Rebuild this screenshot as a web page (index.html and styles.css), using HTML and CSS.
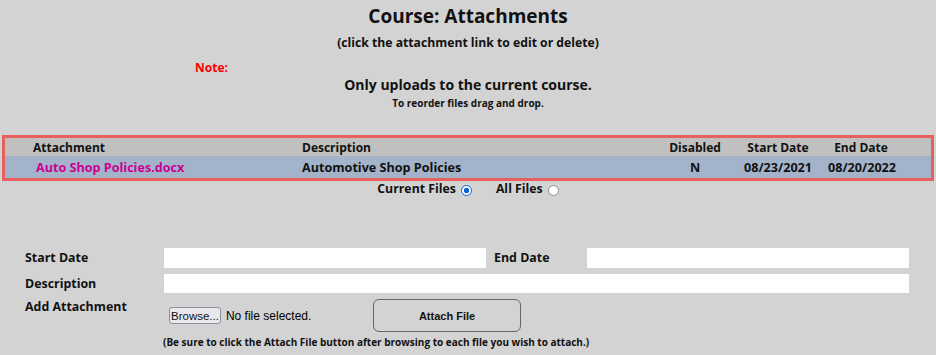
FILE: index.html
```html
<!DOCTYPE html>
<html lang="en">
<head>
    <meta charset="UTF-8">
    <title>Course: Attachments</title>
    <link rel="stylesheet" href="styles.css">
</head>
<body>
    <div class="page">
        <!-- Heading -->
        <h1 class="title">Course: Attachments</h1>
        <p class="subtitle">(click the attachment link to edit or delete)</p>

        <div class="note-row">
            <span class="note">Note:</span>
        </div>
        <p class="note-text">Only uploads to the current course.</p>
        <p class="hint">To reorder files drag and drop.</p>

        <!-- Attachment list -->
        <div class="files">
            <div class="files-row files-head">
                <div class="col-name">Attachment</div>
                <div class="col-desc">Description</div>
                <div class="col-mid">Disabled</div>
                <div class="col-mid">Start Date</div>
                <div class="col-mid">End Date</div>
            </div>
            <div class="files-row files-item">
                <div class="col-name"><a href="#" class="file-link">Auto Shop Policies.docx</a></div>
                <div class="col-desc">Automotive Shop Policies</div>
                <div class="col-mid">N</div>
                <div class="col-mid">08/23/2021</div>
                <div class="col-mid">08/20/2022</div>
            </div>
        </div>

        <div class="filter">
            <label class="filter-opt">Current Files <input type="radio" name="show" checked></label>
            <label class="filter-opt">All Files <input type="radio" name="show"></label>
        </div>

        <!-- Upload form -->
        <form class="upload">
            <div class="form-row">
                <label class="form-label">Start Date</label>
                <input type="text" class="field field-half">
                <label class="form-label label-end">End Date</label>
                <input type="text" class="field field-half">
            </div>
            <div class="form-row row-desc">
                <label class="form-label">Description</label>
                <input type="text" class="field field-full">
            </div>
            <div class="form-row row-attach">
                <label class="form-label label-top">Add Attachment</label>
                <div class="attach-box">
                    <div class="attach-line">
                        <div class="file-pick">
                            <button type="button" class="browse">Browse...</button>
                            <span class="no-file">No file selected.</span>
                        </div>
                        <button type="button" class="attach-btn">Attach File</button>
                    </div>
                    <p class="attach-note">(Be sure to click the Attach File button after browsing to each file you wish to attach.)</p>
                </div>
            </div>
        </form>
    </div>
</body>
</html>
```

FILE: styles.css
```css
body {
    margin: 0;
    padding: 0;
    background-color: #d3d3d3;
    font-family: "Open Sans", "DejaVu Sans", sans-serif;
    font-weight: 700;
    color: #111;
}

.page {
    width: 936px;
}

/* Heading */
.title {
    margin: 4px 0 0;
    font-size: 19px;
    line-height: 24px;
    text-align: center;
}

.subtitle {
    margin: 7px 0 0;
    font-size: 12.2px;
    line-height: 16px;
    text-align: center;
}

.note-row {
    margin-top: 7px;
    padding-left: 195px;
    line-height: 16px;
}

.note {
    color: #ff0000;
    font-size: 12px;
}

.note-text {
    margin: 0;
    font-size: 14px;
    line-height: 18px;
    text-align: center;
}

.hint {
    margin: 3px 0 0;
    font-size: 10px;
    line-height: 12px;
    text-align: center;
}

/* Attachment list */
.files {
    margin: 26px 2px 0;
    border: 3px solid #e8605e;
}

.files-row {
    display: grid;
    grid-template-columns: 297px 360px 66px 100px 66px 1fr;
    align-items: center;
    font-size: 12px;
}

.files-head {
    height: 18px;
    background-color: #c0c0c0;
}

.files-item {
    height: 22px;
    font-size: 12.6px;
    background-color: #a3b3c9;
}

.col-name {
    padding-left: 28px;
}

.files-item .col-name {
    padding-left: 31px;
}

.col-mid {
    text-align: center;
}

.file-link {
    color: #cc0096;
    text-decoration: none;
}

/* Radio filter */
.filter {
    display: flex;
    justify-content: center;
    gap: 24px;
    font-size: 12.3px;
    line-height: 16px;
}

.filter-opt {
    display: flex;
    align-items: center;
}

.filter-opt input {
    appearance: none;
    width: 11px;
    height: 11px;
    margin: 3px 0 0 5px;
    border: 1px solid #8f8f8f;
    border-radius: 50%;
    background-color: #fff;
}

.filter-opt input:checked {
    border-color: #0a64d8;
    background: radial-gradient(circle, #0a64d8 0 2.5px, #fff 3px);
}

/* Upload form */
.upload {
    margin-top: 51px;
    padding-left: 25px;
}

.form-row {
    display: flex;
    align-items: center;
    height: 20px;
    margin-bottom: 6px;
}

.row-desc {
    height: 19px;
}

.form-label {
    width: 139px;
    font-size: 12.4px;
    line-height: 16px;
}

.label-end {
    width: 93px;
    margin-left: 8px;
}

.field {
    height: 100%;
    box-sizing: border-box;
    border: none;
    background-color: #fff;
    padding: 0 4px;
}

.field-half {
    width: 322px;
}

.field-full {
    width: 745px;
}

.row-attach {
    align-items: flex-start;
    height: auto;
}

.attach-line {
    display: flex;
    align-items: center;
}

.file-pick {
    width: 209px;
    display: flex;
    align-items: center;
}

.browse {
    margin-left: 5px;
    height: 17px;
    padding: 0 1px;
    font-family: "Liberation Sans", Arial, sans-serif;
    font-size: 11.5px;
    color: #111;
    background-color: #e9e9ed;
    border: 1px solid #8f8f9d;
    border-radius: 3px;
}

.no-file {
    margin-left: 5px;
    font-family: "Liberation Sans", Arial, sans-serif;
    font-size: 12px;
    font-weight: 400;
    color: #000;
}

.attach-btn {
    width: 148px;
    height: 33px;
    font-family: "Liberation Sans", Arial, sans-serif;
    font-size: 11px;
    font-weight: 700;
    color: #111;
    background-color: #d3d3d3;
    border: 1px solid #666;
    border-radius: 6px;
}

.attach-note {
    margin: 2px 0 0 -1px;
    font-size: 10px;
    line-height: 16px;
}
```
